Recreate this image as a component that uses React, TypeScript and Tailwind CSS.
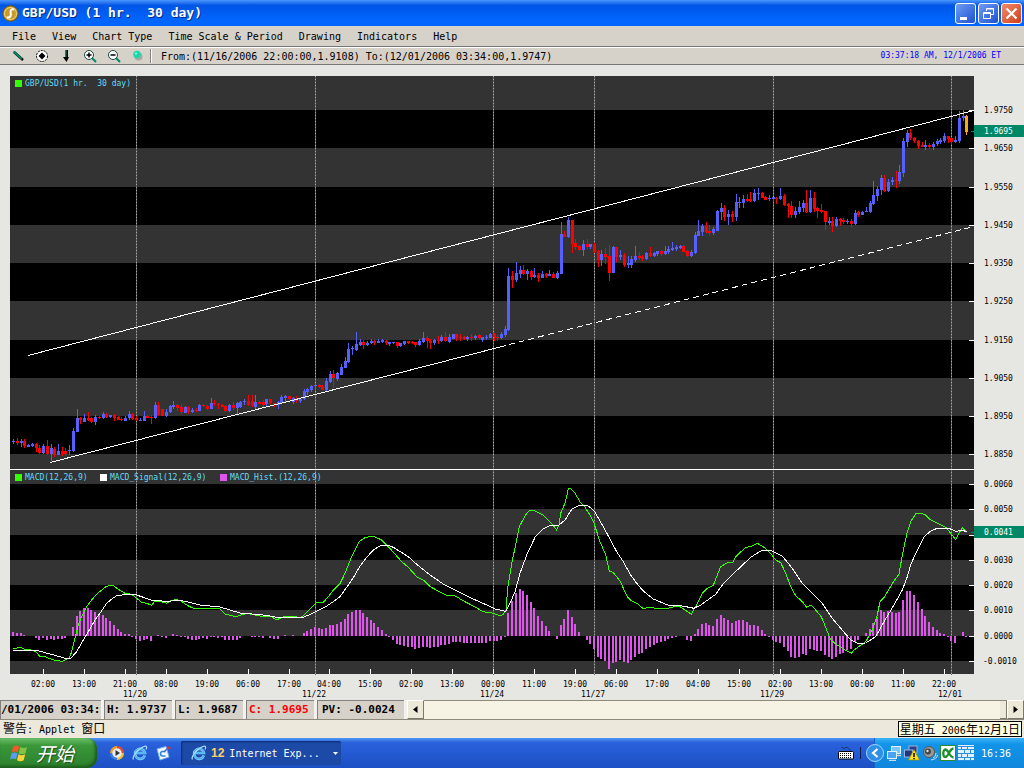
import React from "react";

type Segment = { origin: number; rows: string };

/* Each row: body top, body bottom, wick high, wick low (thirds of a unit below origin), colour key */
const SEGMENTS: Segment[] = [
  {
    origin: 340,
    rows:
      "303,306,298,313,B;303,309,293,315,R;303,309,297,320,B;303,318,298,323,R;315,320,312,322,B;311,317,310,320,B;313,325,309,335,R;324,338,315,342,R;318,340,313,343,B;318,342,300,346,R;325,343,312,364,B;328,345,321,350,R;333,345,312,346,B;333,343,321,348,R;333,343,325,347,R;331,334,316,345,B;274,332,264,336,B;235,275,207,276,B;235,240,231,251,R;234,245,222,247,B;234,240,216,243,R;235,245,230,248,R;232,246,225,254,B;231,235,228,237,R;223,235,215,237,B;223,231,220,233,R;226,231,224,233,B;226,235,223,242,R;231,239,228,241,R;236,241,231,243,R;234,242,229,243,B;223,235,213,240,B;223,236,220,240,R;235,241,228,243,R;240,243,234,243,B;227,242,213,243,B;227,233,225,235,R;231,235,225,251,R;195,234,186,236,B;195,225,186,227,R;208,227,207,228,R;216,228,207,232,B;198,217,195,219,B;195,201,183,208,B;195,205,192,213,R;200,217,192,223,R;202,218,198,220,B;202,215,198,222,R;210,216,204,218,B;209,213,205,216,R;195,212,192,214,B;195,199,192,202,R;198,208,196,211,R;189,207,174,208,B;189,192,180,197,R;192,196,190,206,R;195,200,193,202,R;198,213,196,216,R;195,213,192,216,B;195,203,186,210,R;190,205,186,222,B;186,200,184,205,B;183,187,178,195,B;184,195,166,199,R;184,198,165,200,R;186,200,166,208,B;186,191,182,192,R;187,195,180,204,R;178,193,177,202,B;178,190,176,191,R;190,195,188,200,R;186,195,184,206,B;171,190,166,193,B;169,175,166,188,B;169,178,167,190,R;175,185,170,192,B;176,184,168,188,R;176,182,174,188,B;152,178,148,180,B;147,155,144,165,B;138,150,136,157,B;135,139,130,147,B;135,140,132,145,R;137,149,136,150,R;122,149,114,154,B;102,125,93,129,B;102,113,90,144,R",
  },
  {
    origin: 200,
    rows:
      "520,538,516,543,B;502,524,492,526,B;484,503,472,505,B;447,487,430,490,B;444,448,438,465,B;432,450,396,453,B;426,435,417,437,B;426,435,420,447,R;429,434,423,437,B;424,430,417,432,B;424,429,420,435,R;423,429,417,429,B;421,426,417,429,B;424,430,420,434,R;427,431,426,437,B;427,430,426,433,B;427,437,426,444,R;430,438,428,441,B;424,433,423,434,B;424,429,423,431,R;427,430,423,431,R;427,435,426,440,R;423,435,417,439,B;414,427,396,429,B;415,423,408,444,R;423,428,417,447,R;420,430,417,434,B;420,424,408,432,R;411,424,405,426,B;411,422,396,426,R;411,425,403,430,B;403,416,402,417,B;403,413,402,423,R;410,414,402,423,R;411,418,408,420,R;411,418,408,423,B;411,414,402,423,R;408,413,405,420,B;406,415,402,418,R;412,419,410,426,B;411,414,405,419,B;402,413,399,414,B;402,412,399,424,R;411,414,404,422,R;402,414,396,418,B;388,404,378,410,B;228,390,204,393,B;228,240,213,264,R;219,240,186,246,B;210,221,198,235,B;210,221,195,225,R;213,221,207,240,B;213,231,210,240,R;225,231,204,235,B;225,234,219,246,R;222,234,213,234,B;222,228,219,234,R;222,228,210,228,B;222,234,216,234,R;220,234,213,237,B;102,222,66,222,B;102,110,93,111,R;60,111,51,114,B;60,131,60,159,R;130,141,117,150,R;138,150,135,153,R;132,150,120,168,B;132,141,117,147,R;132,141,131,147,B;132,156,130,160,R;153,180,150,201,R;162,180,150,198,B;162,171,144,192,R;168,219,135,243,R;141,219,138,219,B;141,171,140,186,R;165,171,150,180,B;165,195,159,201,R;190,195,168,204,B;177,195,168,204,B;168,180,138,186,B;168,175,156,180,R;171,177,165,183,R;158,177,155,180,B;158,168,141,171,R;159,168,156,170,B;153,162,152,168,B;153,162,150,168,R;153,162,138,166,B;147,156,138,162,B",
  },
  {
    origin: 90,
    rows:
      "474,480,456,483,B;470,477,465,482,B;468,474,465,477,B;467,486,464,486,R;484,498,480,501,R;486,498,480,501,B;435,489,426,492,B;423,438,390,438,B;408,425,402,438,B;408,426,396,429,R;423,430,405,438,R;418,430,411,435,B;363,423,360,423,B;353,366,339,390,B;353,381,345,393,R;372,381,360,405,B;372,381,363,396,R;336,381,312,393,B;335,339,321,354,B;327,338,315,354,B;327,332,312,336,R;327,334,306,336,R;309,333,297,336,B;309,313,294,330,B;309,323,306,325,R;320,330,318,330,R;323,328,315,333,B;322,326,320,330,B;323,327,321,342,R;317,327,294,330,B;317,345,312,348,R;342,349,339,384,R;348,375,333,384,R;363,375,351,384,B;351,366,333,372,B;339,354,330,366,B;339,366,300,369,R;324,366,300,369,B;324,357,306,366,R;354,362,351,384,R;361,367,342,369,R;363,396,363,420,R;393,399,381,405,B;393,408,381,426,R;387,408,381,411,B;387,393,384,408,R;390,396,384,402,R;393,396,387,402,B;393,402,387,411,R;369,402,360,405,B;366,375,363,381,R;366,374,362,375,B;363,366,350,366,B;339,366,333,369,B;314,342,273,345,B;297,318,288,333,B;264,300,255,315,B;264,303,255,306,R;276,303,267,306,B;270,276,261,285,B;269,273,243,294,R;246,273,225,282,B;153,249,144,261,B;129,156,120,171,B;129,144,117,150,R;143,153,141,159,R;153,168,150,177,R;165,171,156,171,R;165,171,150,180,B;165,171,159,177,R;162,171,156,180,B;153,163,147,168,B;150,156,144,162,B;138,153,129,159,B;138,147,138,159,R;144,156,140,162,R;150,156,138,159,B;84,153,63,159,B;78,85,60,93,B;78,126,75,135,O",
  },
];

const HISTOGRAM = [
  11, 8, 9, 3, 0, 0, -5, -11, -5, -11, -8, -12, -8, -8, -5, 0, 27, 60, 75, 84, 84, 78, 72, 66, 62, 54, 45, 32, 20, 12, 6, 6,
  -3, -9, -14, -12, -9, -14, 0, 2, -2, -5, 0, 6, 3, -3, -3, -8, -11, -12, -8, -5, -8, -3, -3, -5, -3, -11, -12, -11, -11, -5,
  0, 0, -3, -3, -3, -5, 0, -5, -8, -8, 0, 2, 0, 2, 0, 0, 8, 14, 20, 26, 24, 22, 24, 33, 33, 36,
  42, 51, 66, 72, 78, 78, 69, 57, 48, 39, 27, 18, 6, -3, -12, -24, -27, -30, -33, -33, -39, -36, -33, -33, -36, -33, -33, -27,
  -27, -24, -18, -18, -18, -21, -21, -21, -21, -21, -21, -21, -15, -15, -15, -12, -3, 69, 105, 129, 141, 136, 123, 102, 84, 60,
  45, 30, 15, 0, -9, 33, 51, 78, 57, 36, 12, 0, -12, -24, -39, -62, -69, -75, -99, -81, -78, -72, -78, -81, -72, -63, -54, -51,
  -39, -33, -27, -21, -18, -15, -9, -6, -3, 0, 0, -12, -15, 6, 21, 36, 39, 33, 30, 50, 63, 54, 48, 39, 45, 48, 48, 42, 33, 33,
  30, 18, 6, -3, -12, -18, -21, -33, -45, -63, -66, -63, -54, -57, -39, -42, -45, -45, -57, -63, -69, -63, -53, -50, -42, -39,
  -18, -12, 0, 9, 21, 39, 57, 78, 72, 75, 72, 69, 72, 108, 135, 135, 123, 102, 81, 60, 42, 27, 18, 9, 6, -3, -15, -21, 0, 12, -3,
];

type Curve = { origin: number; points: string }[];

const MACD: Curve = [
  {
    origin: 0,
    points:
      "40,535 52,534 62,531 72,537 85,538 108,545 118,558 130,558 150,566 165,571 188,574 208,564 215,545 225,505 235,465 245,440 260,410 275,390 290,372 305,360 318,350 330,346 342,348 355,358 375,370 395,373 410,385 425,397 440,400 455,406 465,393 480,394 500,400 515,391 530,389 545,394 560,405 575,413 590,416 620,417 640,414 660,417 675,432 700,438 715,438 740,430 760,434 790,440 815,441 830,450 845,442 860,438 880,438 900,444 910,437 930,417 950,397 970,397 985,380 1000,360",
  },
  {
    origin: 340,
    points:
      "0,341 15,310 35,260 57,215 75,203 92,199 105,201 125,210 145,230 165,252 185,275 205,292 230,320 250,330 272,351 300,366 325,378 342,376 375,395 400,408 430,425 455,429 480,437 490,433 498,420 503,355 515,280 528,220 538,170 555,138 565,124 577,120 590,125 610,136 630,155 650,180 657,165 662,130 675,100 685,57 690,55 705,70 720,95 735,112 750,135 762,160 780,215 797,255 808,303 820,308 840,333 862,380 875,393 895,403 908,415 930,413 975,417 1000,411 1018,409",
  },
  {
    origin: 684,
    points:
      "0,418 22,433 40,400 55,370 70,355 88,346 100,315 110,290 130,278 147,276 155,260 185,232 200,230 220,220 240,232 258,248 275,270 290,278 305,310 320,350 335,377 355,395 368,412 380,405 395,420 412,440 428,480 440,510 460,525 475,535 502,550 510,540 545,515 565,480 580,435 588,395 600,383 615,358 630,333 645,313 655,255 670,185 680,155 695,131 705,129 722,133 740,150 765,162 785,172 800,190 815,209 825,190 835,173 848,187",
  },
];

const SIGNAL: Curve = [
  {
    origin: 0,
    points:
      "40,543 50,541 110,541 150,552 200,566 212,565 230,545 250,510 265,485 285,450 300,430 320,400 335,387 350,377 380,373 410,375 430,382 455,391 500,394 540,391 560,395 600,405 660,411 720,429 800,436 830,442 910,442 940,429 980,408 1000,395",
  },
  {
    origin: 340,
    points:
      "0,380 25,345 45,315 60,288 80,262 100,240 120,228 145,226 160,232 205,260 230,283 270,315 310,342 350,362 400,387 440,405 465,417 490,422 497,425 510,400 525,365 540,310 560,255 585,202 610,176 630,167 655,167 675,150 695,118 715,107 745,108 763,123 790,170 830,245 850,275 870,312 890,340 910,363 940,387 985,406 1018,407",
  },
  {
    origin: 684,
    points:
      "0,409 30,415 50,405 95,373 115,345 160,300 200,262 230,243 260,241 295,258 325,295 355,340 385,370 415,400 445,445 470,475 500,510 520,520 545,519 575,500 600,455 630,405 655,360 670,320 680,285 695,250 720,200 740,183 760,175 795,175 815,184 835,181 848,185",
  },
];

const toPolyline = (curve: Curve) =>
  curve
    .flatMap((part) =>
      part.points.split(" ").map((p) => {
        const [x, y] = p.split(",").map(Number);
        return `${(part.origin + x / 3).toFixed(1)},${(470 + y / 3).toFixed(1)}`;
      })
    )
    .join(" ");

const COLORS: Record<string, string> = { B: "#5560ff", R: "#ff0000", O: "#ffa516" };

const CANDLES = SEGMENTS.flatMap((s) =>
  s.rows.split(";").map((row) => {
    const [top, bottom, high, low, key] = row.split(",");
    const y = (v: string) => Math.round(s.origin + Number(v) / 3);
    return { top: y(top), bottom: y(bottom), high: y(high), low: y(low), color: COLORS[key] };
  })
);

const barX = (i: number) => Math.round(13.3 + i * 3.7227);

const PRICE_BANDS: [number, number][] = [
  [76, 34],
  [148, 39],
  [225, 38],
  [301, 39],
  [378, 38],
  [454, 15],
];
const MACD_BANDS: [number, number][] = [
  [470, 14],
  [509, 26],
  [560, 25],
  [610, 26],
  [661, 13],
];
const PRICE_LABELS: [number, string][] = [
  [110, "1.9750"],
  [148, "1.9650"],
  [187, "1.9550"],
  [225, "1.9450"],
  [263, "1.9350"],
  [301, "1.9250"],
  [340, "1.9150"],
  [378, "1.9050"],
  [416, "1.8950"],
  [454, "1.8850"],
];
const MACD_LABELS: [number, string][] = [
  [484, "0.0060"],
  [509, "0.0050"],
  [535, ""],
  [560, "0.0030"],
  [585, "0.0020"],
  [610, "0.0010"],
  [636, "0.0000"],
  [661, "-0.0010"],
];
const DATES: [number, string][] = [
  [136, "11/20"],
  [315, "11/22"],
  [493, "11/24"],
  [594, "11/27"],
  [773, "11/29"],
  [951, "12/01"],
];
const TIMES =
  "02:00 13:00 21:00 08:00 19:00 06:00 17:00 04:00 15:00 02:00 13:00 00:00 11:00 19:00 06:00 17:00 04:00 15:00 02:00 13:00 00:00 11:00 22:00".split(
    " "
  );

function Legend({ x, y, color, label }: { x: number; y: number; color: string; label: string }) {
  return (
    <g>
      <rect x={x} y={y - 3} width="7" height="7" fill={color} />
      <text x={x + 10} y={y + 3} fill="#62dcf8" xmlSpace="preserve">
        {label}
      </text>
    </g>
  );
}

function Chart() {
  return (
    <svg
      viewBox="0 65 1024 635"
      className="block h-auto w-full bg-[#e6e6e3] font-['DejaVu_Sans_Mono',monospace] text-[8px]"
      role="img"
      aria-label="GBP/USD hourly chart with MACD"
    >
      <g shapeRendering="crispEdges">
        <rect x="10" y="76" width="964" height="598" fill="#000" />
        {[...PRICE_BANDS, ...MACD_BANDS].map(([y, h]) => (
          <rect key={y} x="10" y={y} width="964" height={h} fill="#333" />
        ))}
        {DATES.map(([x]) => (
          <g key={x}>
            <rect x={x} y="76" width="1" height="599" fill="#666" />
            <line x1={x + 0.5} x2={x + 0.5} y1="76" y2="675" stroke="#a8a8a8" strokeDasharray="1 2" />
          </g>
        ))}
        {HISTOGRAM.map((v, i) =>
          v === 0 ? null : (
            <rect
              key={i}
              x={barX(i) - 1}
              y={v > 0 ? 636 - Math.round(v / 3) : 636}
              width="2"
              height={Math.max(1, Math.round(Math.abs(v) / 3))}
              fill="#e054ee"
            />
          )
        )}
        {CANDLES.map((c, i) => (
          <g key={i} fill={c.color}>
            <rect x={barX(i)} y={c.high} width="1" height={Math.max(1, c.low - c.high)} />
            <rect x={barX(i) - 1} y={c.top} width="3" height={Math.max(1, c.bottom - c.top)} />
          </g>
        ))}
        <polyline points={toPolyline(MACD)} fill="none" stroke="#33ff00" />
        <polyline points={toPolyline(SIGNAL)} fill="none" stroke="#fff" />
        <line x1="28" y1="355.5" x2="974" y2="110.5" stroke="#fff" />
        <line x1="50" y1="462.5" x2="506" y2="345.5" stroke="#fff" />
        <line x1="509" y1="344.5" x2="974" y2="226.5" stroke="#fff" strokeDasharray="6 4" />
        <rect x="10" y="469" width="964" height="1" fill="#fff" />
        {[...PRICE_LABELS, ...MACD_LABELS].map(([y]) => (
          <rect key={y} x="969" y={y} width="5" height="1" fill="#fff" />
        ))}
        {TIMES.map((_, i) => (
          <rect key={i} x={Math.floor(43.3 + i * 40.95)} y="669" width="1" height="5" fill="#fff" />
        ))}
        <rect x="971" y="131" width="3" height="1" fill="#008866" />
        <rect x="971" y="532" width="3" height="1" fill="#008866" />
        <rect x="974" y="125" width="50" height="12" fill="#008866" />
        <rect x="974" y="526" width="50" height="12" fill="#008866" />
      </g>
      <Legend x={15} y={83} color="#33ff00" label="GBP/USD(1 hr.  30 day)" />
      <Legend x={15} y={477} color="#33ff00" label="MACD(12,26,9)" />
      <Legend x={100} y={477} color="#fff" label="MACD_Signal(12,26,9)" />
      <Legend x={220} y={477} color="#e054ee" label="MACD_Hist.(12,26,9)" />
      {[...PRICE_LABELS, ...MACD_LABELS].map(([y, label]) => (
        <text key={y} x={label.startsWith("-") ? 983 : 984} y={y + 3}>
          {label}
        </text>
      ))}
      <text x="984" y="134" fill="#fff">
        1.9695
      </text>
      <text x="984" y="535" fill="#fff">
        0.0041
      </text>
      <g textAnchor="middle">
        {TIMES.map((t, i) => (
          <text key={i} x={Math.floor(43.3 + i * 40.95)} y="687">
            {t}
          </text>
        ))}
        {DATES.map(([x, d]) => (
          <text key={d} x={x - 1} y="697">
            {d}
          </text>
        ))}
      </g>
    </svg>
  );
}

const WINDOW_BUTTON = "flex size-[21px] items-center justify-center rounded-[3px] border border-white";

function TitleBar() {
  return (
    <header className="flex h-[26px] items-center gap-[3px] bg-linear-to-b from-[#4a96ff] via-[#0055e5] via-20% to-[#0066ff] to-80% pr-[2px] pl-[2px]">
      <svg viewBox="0 0 17 17" className="size-[17px]" aria-hidden="true">
        <circle cx="8.500" cy="8.500" r="7.700" fill="#c69a2c" stroke="#6e5210" />
        <circle cx="8.500" cy="8.500" r="6" fill="none" stroke="#f3d67a" />
        <path d="M12.300 4.500C9 3.500 8.200 5.500 8.700 8s0 5-4 4.300" fill="none" stroke="#fff" strokeWidth="2" />
      </svg>
      <h1 className="flex-1 text-[13px] font-bold whitespace-pre text-white [text-shadow:1px_1px_0_#0a2a80]">
        {"GBP/USD (1 hr.  30 day)"}
      </h1>
      <div className="flex gap-[2px]">
        <button aria-label="Minimize" className={`${WINDOW_BUTTON} bg-linear-to-br from-[#6f9cf5] to-[#1f4fd0]`}>
          <svg viewBox="0 0 19 19" className="size-[19px]">
            <rect x="4" y="13" width="7" height="3" fill="#fff" />
          </svg>
        </button>
        <button aria-label="Restore" className={`${WINDOW_BUTTON} bg-linear-to-br from-[#6f9cf5] to-[#1f4fd0]`}>
          <svg viewBox="0 0 19 19" className="size-[19px]" fill="none" stroke="#fff">
            <path d="M7.500 7V4.500h7v6H12M7 5h8" />
            <path d="M4.500 8.500h7v6h-7zM4 9.500h8" />
          </svg>
        </button>
        <button aria-label="Close" className={`${WINDOW_BUTTON} bg-linear-to-br from-[#f08a68] to-[#cf3a12]`}>
          <svg viewBox="0 0 19 19" className="size-[19px]" stroke="#fff" strokeWidth="2.200">
            <path d="M4.500 4.500l10 10M14.500 4.500l-10 10" />
          </svg>
        </button>
      </div>
    </header>
  );
}

const MENU = ["File", "View", "Chart Type", "Time Scale & Period", "Drawing", "Indicators", "Help"];

const TOOLS: { label: string; icon: React.ReactNode }[] = [
  {
    label: "Trend line",
    icon: (
      <g>
        <path d="M3 3l9 8" stroke="#000" strokeWidth="2.500" />
        <path d="M2.500 2.500l8.500 7.500" stroke="#008866" strokeWidth="2" />
      </g>
    ),
  },
  {
    label: "Marker",
    icon: (
      <g>
        <circle cx="7" cy="7" r="5.500" fill="#fff" stroke="#000" strokeDasharray="2 1" />
        <path d="M7 3.500L10.500 7 7 10.500 3.500 7z" fill="#000" />
      </g>
    ),
  },
  {
    label: "Down arrow",
    icon: (
      <g>
        <path d="M6 1h3v8H6z" fill="#000" />
        <path d="M6 1h1.500v8H6z" fill="#008866" />
        <path d="M4 8h6l-2.500 5z" fill="#000" />
      </g>
    ),
  },
  {
    label: "Zoom in",
    icon: (
      <g>
        <path d="M9 9l4 4" stroke="#008866" strokeWidth="2" />
        <circle cx="6" cy="6" r="4.500" fill="#fff" stroke="#1c4a40" />
        <path d="M3.500 6h5M6 3.500v5" stroke="#000" strokeWidth="1.500" />
      </g>
    ),
  },
  {
    label: "Zoom out",
    icon: (
      <g>
        <path d="M9 9l4 4" stroke="#008866" strokeWidth="2" />
        <circle cx="6" cy="6" r="4.500" fill="#fff" stroke="#1c4a40" />
        <path d="M3.500 6h5" stroke="#000" strokeWidth="1.500" />
      </g>
    ),
  },
  {
    label: "Refresh",
    icon: (
      <g>
        <circle cx="7.500" cy="7.500" r="4" fill="#a9a9a0" />
        <circle cx="6" cy="5.500" r="3.700" fill="#18d8a8" />
        <circle cx="5" cy="4.500" r="1.200" fill="#7ff5e6" />
      </g>
    ),
  },
];

function Toolbar() {
  return (
    <div className="flex h-[18px] items-center border-t border-b border-t-white border-b-[#777] bg-[#d6d1c9] pl-[6px] pr-[23px]">
      {TOOLS.map((tool) => (
        <button key={tool.label} aria-label={tool.label} className="flex w-6 justify-center">
          <svg viewBox="0 0 14 14" className="size-[14px]" fill="none">
            {tool.icon}
          </svg>
        </button>
      ))}
      <div className="h-[14px] w-[2px] border-l border-[#808080] bg-white" />
      <p className="ml-[9px] flex-1 text-[10px] whitespace-nowrap">
        From:(11/16/2006 22:00:00,1.9108) To:(12/01/2006 03:34:00,1.9747)
      </p>
      <time className="text-[8px] text-[#0000ff]">03:37:18 AM, 12/1/2006 ET</time>
    </div>
  );
}

const CELL =
  "flex h-[19px] items-center overflow-hidden border-t border-l border-[#808080] bg-[#d6d1c9] whitespace-nowrap";
const ARROW =
  "flex h-[19px] w-[17px] items-center justify-center border border-t-white border-r-[#7b786c] border-b-[#7b786c] border-l-white bg-[#ece9d8]";

function StatusBar() {
  return (
    <div className="flex h-5 items-end gap-[3px] border-b border-[#8d8a7c] bg-[#f4f2ec] text-[11px] font-bold">
      <div className={`${CELL} w-[101px]`}>/01/2006 03:34:</div>
      <div className={`${CELL} w-[68px] pl-[2px]`}>H: 1.9737</div>
      <div className={`${CELL} w-[68px] pl-[2px]`}>L: 1.9687</div>
      <div className={`${CELL} w-[68px] pl-[2px] text-[#ff0000]`}>C: 1.9695</div>
      <div className={`${CELL} w-[87px] pl-[4px]`}>PV: -0.0024</div>
      <div className="flex flex-1 items-end bg-[#f8f5ea]">
        <button aria-label="Scroll left" className={ARROW}>
          <svg viewBox="0 0 5 7" className="h-[7px] w-[5px]">
            <path d="M4.500 0v7L0 3.500z" />
          </svg>
        </button>
        <div className="flex h-[19px] flex-1 justify-end border-t border-[#8d8a7c] bg-[#f6f2e4]">
          <div className="h-full w-[7px] border-r border-b border-[#7b786c] bg-[#ece9d8]" />
        </div>
        <button aria-label="Scroll right" className={ARROW}>
          <svg viewBox="0 0 5 7" className="h-[7px] w-[5px]">
            <path d="M0.500 0v7L5 3.500z" />
          </svg>
        </button>
      </div>
    </div>
  );
}

const CJK = "text-[12px] font-['Noto_Sans_CJK_SC',sans-serif]";

function AppletNotice() {
  return (
    <div className="flex h-[18px] items-center justify-between bg-[#ece8dc] pr-[2px] pl-[3px] text-[10px] leading-[14px] whitespace-pre">
      <p>
        <span className={CJK}>警告</span>
        {": Applet "}
        <span className={CJK}>窗口</span>
      </p>
      <div role="tooltip" className="z-10 h-[16px] border border-black bg-[#ffffe4] px-px">
        <span className={CJK}>星期五</span> 2006<span className={CJK}>年</span>12<span className={CJK}>月</span>1
        <span className={CJK}>日</span>
      </div>
    </div>
  );
}

function IeIcon() {
  return (
    <svg viewBox="0 0 16 16" className="size-4" fill="none" aria-hidden="true">
      <path d="M12.800 10.500A5 5 0 1 1 13 8H4" stroke="#8fd4ff" strokeWidth="2.600" />
      <path d="M12.800 10.500A5 5 0 1 1 13 8H4" stroke="#46aef2" strokeWidth="1.400" />
      <path d="M1.500 14.500C-.5 12 6 3.500 12 1.500c3-1 3 1 2 3" stroke="#a8defc" strokeWidth="1.200" />
    </svg>
  );
}

function Taskbar() {
  return (
    <footer className="flex h-[30px] items-stretch bg-linear-to-b from-[#4f97f5] via-[#2a62dc] via-15% to-[#1c4fc4] text-white">
      <button className="flex w-[97px] items-center gap-[6px] rounded-r-[10px] bg-linear-to-b from-[#6cc06a] via-[#3a973a] via-25% to-[#2c802c] pl-[10px] shadow-[inset_-2px_-2px_3px_#1c5a1c]">
        <svg viewBox="0 0 20 18" className="h-[18px] w-5" aria-hidden="true">
          <path d="M3 2.500c2-1.200 4-1.200 6.200 0L7.800 8.500c-2-1.200-4-1.200-6 0z" fill="#f0592a" />
          <path d="M10.200 3c2.300 1.300 4.500 1.200 6.800 0l-1.500 6.200c-2.200 1.200-4.500 1.200-6.700 0z" fill="#82c341" />
          <path d="M1.500 9.500c2-1.200 4-1.200 6 0L6 15.500c-2-1.200-4-1.200-6 0z" fill="#5b9bf5" />
          <path d="M8.500 10.200c2.300 1.300 4.500 1.200 6.700 0l-1.500 6c-2.200 1.300-4.500 1.200-6.700 0z" fill="#ffd23c" />
        </svg>
        <span className="text-[19px] leading-[28px] italic [text-shadow:1px_1px_1px_#1d4d1d] font-['Noto_Sans_CJK_SC',sans-serif]">
          开始
        </span>
      </button>
      <nav aria-label="Quick launch" className="flex items-center gap-[7px] pl-3">
        <button aria-label="Media player">
          <svg viewBox="0 0 16 16" className="size-4">
            <circle cx="8" cy="8" r="7" fill="#3b7de0" />
            <path d="M8 1a7 7 0 0 1 7 7H8z" fill="#e8452c" />
            <path d="M8 1a7 7 0 0 0-7 7h7z" fill="#f59a20" />
            <path d="M15 8a7 7 0 0 1-7 7V8z" fill="#f4c430" />
            <circle cx="8" cy="8" r="4.700" fill="#e9eef4" />
            <path d="M6.500 5l4.500 3-4.500 3z" fill="#333" />
          </svg>
        </button>
        <button aria-label="Internet Explorer">
          <IeIcon />
        </button>
        <button aria-label="Show desktop">
          <svg viewBox="0 0 16 16" className="size-4">
            <path d="M2 4l9-2.500L14 12l-9 3z" fill="#f4f8ff" stroke="#7bb4ee" />
            <path d="M10.500 6.500H7.300a2.300 2.300 0 0 0 0 4.500h3.200" fill="none" stroke="#2a82d8" strokeWidth="1.600" />
            <path d="M9 7l5-5" stroke="#3b6fc4" strokeWidth="1.500" />
            <circle cx="14.200" cy="3" r="1.400" fill="#e03030" />
          </svg>
        </button>
      </nav>
      <button className="my-[3px] ml-[10px] flex w-[160px] items-center rounded-[2px] bg-[#1d4aa6] pr-[3px] pl-[10px] text-[10px] shadow-[inset_1px_1px_2px_#0c2c74]">
        <IeIcon />
        <span className="ml-[4px] text-[12px] font-bold text-[#ffcf6a] font-['Liberation_Sans',sans-serif]">12</span>
        <span className="ml-[5px] flex-1 text-left">Internet Exp...</span>
        <svg viewBox="0 0 5 3" className="h-[3px] w-[5px]" fill="#fff">
          <path d="M0 0h5L2.500 3z" />
        </svg>
      </button>
      <div className="flex flex-1 items-center justify-end gap-[6px] pr-[13px]">
        <button aria-label="Keyboard layout">
          <svg viewBox="0 0 16 14" className="h-[14px] w-4">
            <path d="M4 1q1 2 3 1t3 0q2 1 2 3" fill="none" stroke="#111" strokeDasharray="1 1" />
            <rect x="0.500" y="5.500" width="15" height="7.500" rx="1" fill="#fff" stroke="#000" />
            <path d="M2 7.500h12M2 9.500h12M2 11.500h12" stroke="#000" strokeDasharray="1 1" />
          </svg>
        </button>
        <div className="h-3 w-px bg-[#0d1f52]" />
      </div>
      <div className="flex items-center gap-[2px] border-l border-[#1560c0] bg-linear-to-b from-[#38b4f8] via-[#1294e8] via-20% to-[#0f86dc] pr-[13px]">
        <button
          aria-label="Show hidden icons"
          className="-ml-[9px] flex size-[18px] items-center justify-center rounded-full border border-[#9bd8ff] bg-[#2f8fe8]"
        >
          <svg viewBox="0 0 8 10" className="h-[10px] w-2" fill="none" stroke="#fff" strokeWidth="2.200">
            <path d="M6.500 1L2 5l4.500 4" />
          </svg>
        </button>
        <svg viewBox="0 0 16 16" className="size-4" role="img" aria-label="Network">
          <rect x="5.500" y="1.500" width="9" height="7" fill="#79c8ff" stroke="#dff0ff" />
          <rect x="1.500" y="6.500" width="9" height="7" fill="#4aa4f4" stroke="#dff0ff" />
          <path d="M3 15.500h7M11 10.500h4" stroke="#cfd8e4" strokeWidth="1.500" />
        </svg>
        <svg viewBox="0 0 16 16" className="size-4" role="img" aria-label="Network warning">
          <rect x="5" y="1" width="8" height="7" fill="#2a3d8a" stroke="#9db3d8" />
          <rect x="0.500" y="5" width="8" height="7" fill="#22357c" stroke="#9db3d8" />
          <path d="M10 4.500l5.500 10.500h-11z" fill="#ffe11a" stroke="#a88a00" strokeWidth="0.700" />
          <path d="M10 8v4M10 13v1.300" stroke="#000" strokeWidth="1.500" />
        </svg>
        <svg viewBox="0 0 16 16" className="size-4" role="img" aria-label="Volume">
          <circle cx="7" cy="7" r="5.500" fill="#999" stroke="#555" />
          <circle cx="6" cy="6.500" r="3" fill="#444" />
          <circle cx="5.500" cy="6" r="1.200" fill="#ddd" />
          <path d="M11 13q3-1 3-5M9 15q6-1 6.500-5" fill="none" stroke="#cfe4ff" />
        </svg>
        <svg viewBox="0 0 16 16" className="size-4" role="img" aria-label="Security suite">
          <rect x="0.500" y="0.500" width="15" height="15" fill="#fff" stroke="#2d8a2d" />
          <path d="M13.500 3.500C9 4 8.500 12 5.500 12S2.500 4.500 5.500 4.500 9 12 13.500 12.500" fill="none" stroke="#1f8f2d" strokeWidth="2.300" />
        </svg>
        <svg viewBox="0 0 16 16" className="size-4" role="img" aria-label="Firewall">
          <rect width="16" height="16" fill="#dff1ff" />
          <path
            d="M0 1.500h16M0 4.500h16M0 8.500h16M0 12.500h16M0 15.500h16M3.500 1v4M9.500 1v4M6.500 5v4M12.500 5v4M3.500 9v4M9.500 9v4M6.500 13v3M12.500 13v3"
            stroke="#2b8fe0"
          />
        </svg>
        <time className="ml-[5px] text-[10px]">16:36</time>
      </div>
    </footer>
  );
}

export default function App() {
  return (
    <div className="flex min-h-screen flex-col bg-[#e6e6e3] text-black font-['DejaVu_Sans_Mono','Noto_Sans_CJK_SC',monospace]">
      <TitleBar />
      <nav
        aria-label="Main menu"
        className="flex h-[21px] items-center gap-4 border-b border-[#777] bg-[#d6d1c9] pl-3 text-[10px]"
      >
        {MENU.map((item) => (
          <button key={item} className="whitespace-nowrap">
            {item}
          </button>
        ))}
      </nav>
      <Toolbar />
      <main className="flex-1">
        <Chart />
      </main>
      <StatusBar />
      <AppletNotice />
      <Taskbar />
    </div>
  );
}
